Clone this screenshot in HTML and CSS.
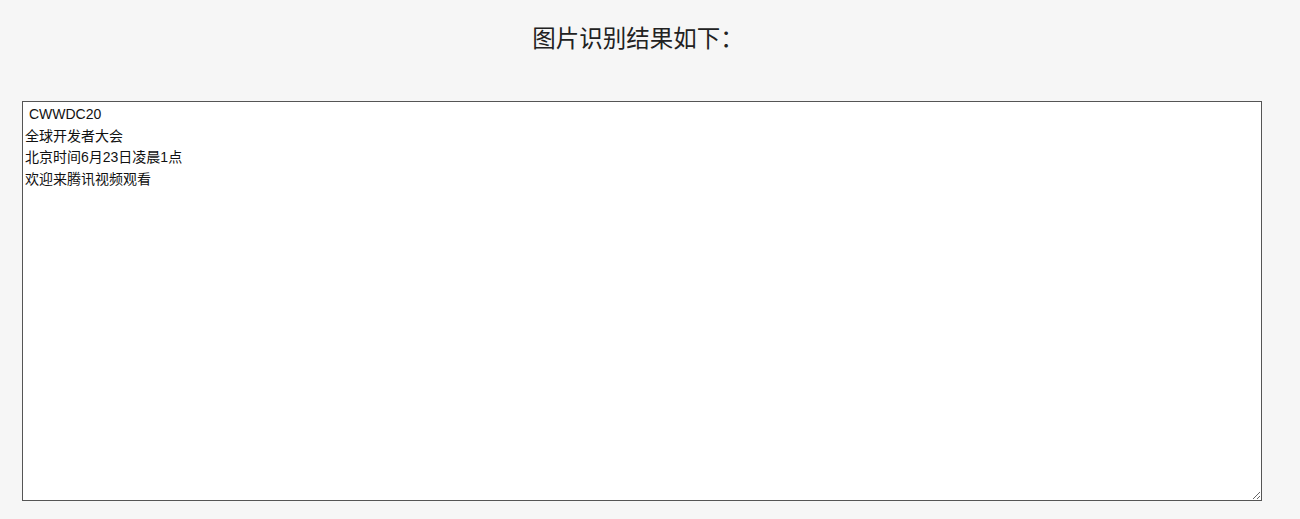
FILE: index.html
```html
<!DOCTYPE html>
<html lang="zh-CN">
<head>
<meta charset="utf-8">
<title>图片识别结果</title>
<link rel="stylesheet" href="styles.css">
</head>
<body>
<div class="page">
  <h1 class="title">图片识别结果如下：</h1>
  <textarea class="result"> CWWDC20
全球开发者大会
北京时间6月23日凌晨1点
欢迎来腾讯视频观看</textarea>
</div>
</body>
</html>
```
FILE: styles.css
```css
html, body {
  margin: 0;
  padding: 0;
  background: #f6f6f6;
}
.page {
  padding: 21px 0 0 22px;
  display: flex;
  flex-direction: column;
  align-items: flex-start;
  font-family: "Noto Sans", "Noto Sans CJK SC", sans-serif;
}
.title {
  align-self: stretch;
  margin: 0 46px 0 0;
  text-align: center;
  font-size: 23.5px;
  line-height: 34px;
  font-weight: normal;
  color: #222;
}
.result {
  margin-top: 46px;
  box-sizing: border-box;
  width: 1240px;
  height: 400px;
  padding: 2px;
  border: 1px solid #555;
  background: #fff;
  color: #111;
  font-family: "Liberation Sans", "Noto Sans CJK SC", sans-serif;
  font-size: 14px;
  line-height: 21.5px;
  outline: none;
}
```
